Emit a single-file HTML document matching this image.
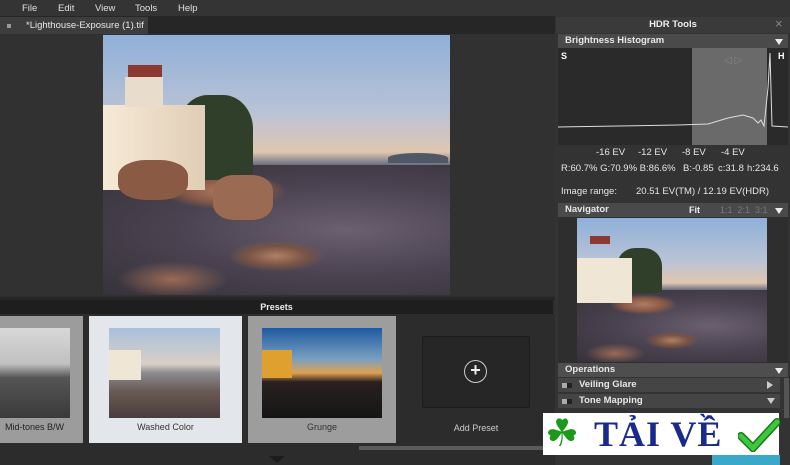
<!DOCTYPE html>
<html><head><style>
*{margin:0;padding:0;box-sizing:border-box}
body{width:790px;height:465px;background:#2f2f2f;font-family:"Liberation Sans",sans-serif;font-size:10px;color:#ddd;position:relative;overflow:hidden}
.a{position:absolute}
.photo{overflow:hidden;background:linear-gradient(180deg,#8fb0d8 0%,#b9c3d6 30%,#e0c6b0 45%,#6a6f80 50%,#4a4045 70%,#5a4a48 100%)}
.photo .rock{position:absolute;left:0;right:0;bottom:0;height:50%;background:
radial-gradient(ellipse 18% 14% at 35% 20%,#b07a60 0%,#8a5a48 60%,transparent 100%),
radial-gradient(ellipse 14% 12% at 50% 70%,#b08068 0%,#7a5444 60%,transparent 100%),
radial-gradient(ellipse 16% 14% at 20% 88%,#9a6a55 0%,transparent 100%),
radial-gradient(ellipse at 70% 50%,#6a6070 0%,#4a4250 50%,#36323a 100%)}
.photo .lh{position:absolute;background:#efe6d6}
.photo .tree{position:absolute;background:#2f3f2a;border-radius:40% 40% 10% 10%}
.hdr{background:#4a4a4a;color:#e8e8e8;font-weight:bold;font-size:9.5px;padding-left:7px;line-height:14px}
.tri{position:absolute;width:0;height:0;border-left:4px solid transparent;border-right:4px solid transparent;border-top:6px solid #eee}
</style></head><body>
<div class="a" style="left:0;top:0;width:790px;height:16px;background:#343434"></div>
<div class="a" style="top:3px;left:22px;color:#e0e0e0;font-size:9.5px">File</div>
<div class="a" style="top:3px;left:58px;color:#e0e0e0;font-size:9.5px">Edit</div>
<div class="a" style="top:3px;left:95px;color:#e0e0e0;font-size:9.5px">View</div>
<div class="a" style="top:3px;left:135px;color:#e0e0e0;font-size:9.5px">Tools</div>
<div class="a" style="top:3px;left:178px;color:#e0e0e0;font-size:9.5px">Help</div>
<div class="a" style="left:0;top:16px;width:556px;height:18px;background:#262626"></div>
<div class="a" style="left:0;top:17px;width:148px;height:17px;background:#3d3d3d"></div>
<div class="a" style="left:7px;top:24px;width:4px;height:4px;background:#999"></div>
<div class="a" style="left:26px;top:20px;font-size:9.5px;color:#e8e8e8">*Lighthouse-Exposure (1).tif</div>
<div class="a" style="left:0;top:34px;width:556px;height:262px;background:#313131"></div>
<div class="a photo" style="left:103px;top:35px;width:347px;height:260px">
 <div class="rock"></div>
 <div class="tree" style="left:75px;top:60px;width:75px;height:85px"></div>
 <div class="a" style="left:285px;top:118px;width:60px;height:10px;background:#505866;border-radius:50% 50% 0 0"></div>
 <div class="lh" style="left:0;top:70px;width:102px;height:85px;background:linear-gradient(90deg,#f6ead6,#e0cdb6)"></div>
 <div class="lh" style="left:22px;top:42px;width:38px;height:30px;background:#e8dccd"></div>
 <div class="a" style="left:25px;top:30px;width:34px;height:12px;background:#8a3a30"></div>
 <div class="a" style="left:15px;top:125px;width:70px;height:40px;background:#8a5a44;border-radius:40%"></div>
 <div class="a" style="left:110px;top:140px;width:60px;height:45px;background:#9a6a52;border-radius:35%"></div>
</div>
<div class="a" style="left:0;top:297px;width:556px;height:3px;background:#262626"></div>
<div class="a" style="left:0;top:300px;width:553px;height:14px;background:#1e1e1e;text-align:center;font-weight:bold;font-size:9px;line-height:14px;color:#eee">Presets</div>
<div class="a" style="left:0;top:314px;width:556px;height:151px;background:#2c2c2c"></div>
<div class="a" style="left:0;top:316px;width:83px;height:127px;background:#9c9c9c"></div>
<div class="a" style="left:0;top:328px;width:70px;height:90px;background:linear-gradient(180deg,#d8d8d8 0%,#c0c0c0 40%,#555 55%,#3a3a3a 100%)"></div>
<div class="a" style="left:-14px;top:422px;width:97px;text-align:center;color:#222;font-size:9px">Mid-tones B/W</div>
<div class="a" style="left:89px;top:316px;width:153px;height:127px;background:#e3e6ea"></div>
<div class="a" style="left:109px;top:328px;width:111px;height:90px;background:linear-gradient(180deg,#a8c0dc 0%,#d9cfc6 40%,#8a8a90 50%,#6a5a55 70%,#4a3d3d 100%)"></div>
<div class="a" style="left:109px;top:350px;width:32px;height:30px;background:#efe6d6"></div>
<div class="a" style="left:89px;top:422px;width:153px;text-align:center;color:#333;font-size:9px">Washed Color</div>
<div class="a" style="left:248px;top:316px;width:148px;height:127px;background:#9d9d9d"></div>
<div class="a" style="left:262px;top:328px;width:120px;height:90px;background:linear-gradient(180deg,#1f5aa0 0%,#7aa0c0 35%,#e0a050 50%,#2a2020 60%,#151515 100%)"></div>
<div class="a" style="left:262px;top:350px;width:30px;height:28px;background:#e0a030"></div>
<div class="a" style="left:248px;top:422px;width:148px;text-align:center;color:#333;font-size:9px">Grunge</div>
<div class="a" style="left:422px;top:336px;width:108px;height:72px;background:#262626;border:1px solid #1c1c1c"></div>
<div class="a" style="left:464px;top:360px;width:23px;height:23px;border:1.5px solid #ccc;border-radius:50%;color:#eee;font-size:18px;line-height:18px;text-align:center;font-weight:bold">+</div>
<div class="a" style="left:422px;top:423px;width:108px;text-align:center;color:#ccc;font-size:9px">Add Preset</div>
<div class="a" style="left:359px;top:446px;width:185px;height:4px;background:#5a5a5a"></div>
<div class="a" style="left:269px;top:456px;width:0;height:0;border-left:8px solid transparent;border-right:8px solid transparent;border-top:7px solid #1c1c1c"></div>
<div class="a" style="left:555px;top:16px;width:235px;height:449px;background:#333"></div>
<div class="a" style="left:556px;top:17px;width:234px;height:16px;background:#3a3a3a;text-align:center;font-weight:bold;font-size:9.5px;line-height:16px;color:#eee">HDR Tools</div>
<div class="a" style="left:775px;top:16px;color:#888;font-size:13px">×</div>
<div class="a hdr" style="left:558px;top:34px;width:230px">Brightness Histogram</div>
<div class="tri" style="left:775px;top:39px"></div>
<div class="a" style="left:558px;top:48px;width:230px;height:97px;background:#2a2a2a"></div>
<div class="a" style="left:692px;top:48px;width:75px;height:97px;background:#6a6a6a"></div>
<div class="a" style="left:561px;top:51px;color:#fff;font-weight:bold;font-size:9px">S</div>
<div class="a" style="left:778px;top:51px;color:#fff;font-weight:bold;font-size:9px">H</div>
<svg class="a" style="left:558px;top:48px" width="230" height="97"><polyline fill="none" stroke="#ddd" stroke-width="1" points="0,79 60,78 120,77 150,76 170,70 185,67 195,70 200,75 203,72 206,78 210,40 212,5 214,78 230,79"/><text x="166" y="15" fill="#888" font-size="10">◁ ▷</text></svg>
<div class="a" style="left:596px;top:147px;font-size:9.5px;color:#e6e6e6">-16 EV</div>
<div class="a" style="left:638px;top:147px;font-size:9.5px;color:#e6e6e6">-12 EV</div>
<div class="a" style="left:682px;top:147px;font-size:9.5px;color:#e6e6e6">-8 EV</div>
<div class="a" style="left:721px;top:147px;font-size:9.5px;color:#e6e6e6">-4 EV</div>
<div class="a" style="left:561px;top:163px;font-size:9.5px;color:#e6e6e6">R:60.7% G:70.9% B:86.6%</div>
<div class="a" style="left:683px;top:163px;font-size:9.5px;color:#e6e6e6">B:-0.85</div>
<div class="a" style="left:718px;top:163px;font-size:9.5px;color:#e6e6e6">c:31.8</div>
<div class="a" style="left:747px;top:163px;font-size:9.5px;color:#e6e6e6">h:234.6</div>
<div class="a" style="left:561px;top:186px;font-size:9.5px;color:#e6e6e6">Image range:</div>
<div class="a" style="left:636px;top:186px;font-size:9.5px;color:#e6e6e6">20.51 EV(TM) / 12.19 EV(HDR)</div>
<div class="a hdr" style="left:558px;top:203px;width:230px">Navigator</div>
<div class="a" style="left:689px;top:205px;font-size:9px;font-weight:bold;color:#eee">Fit</div>
<div class="a" style="left:720px;top:205px;font-size:9px;color:#777;white-space:pre">1:1  2:1  3:1</div>
<div class="tri" style="left:775px;top:208px"></div>
<div class="a" style="left:558px;top:217px;width:230px;height:146px;background:#2e2e2e"></div>
<div class="a photo" style="left:577px;top:218px;width:190px;height:144px">
 <div class="rock"></div>
 <div class="tree" style="left:40px;top:30px;width:45px;height:45px"></div>
 <div class="lh" style="left:0;top:40px;width:55px;height:45px"></div>
 <div class="a" style="left:13px;top:18px;width:20px;height:8px;background:#8a3a30"></div>
</div>
<div class="a hdr" style="left:558px;top:363px;width:230px;background:#4e4e4e">Operations</div>
<div class="tri" style="left:775px;top:368px"></div>
<div class="a hdr" style="left:558px;top:378px;width:222px;padding-left:21px;background:#454545">Veiling Glare</div>
<div class="a" style="left:562px;top:383px;width:10px;height:5px;background:#aaa;border-right:5px solid #222"></div>
<div class="a" style="left:767px;top:381px;border-top:4px solid transparent;border-bottom:4px solid transparent;border-left:6px solid #ccc"></div>
<div class="a hdr" style="left:558px;top:394px;width:222px;padding-left:21px;background:#454545">Tone Mapping</div>
<div class="a" style="left:562px;top:399px;width:10px;height:5px;background:#aaa;border-right:5px solid #222"></div>
<div class="tri" style="left:767px;top:398px;border-top-color:#ccc"></div>
<div class="a" style="left:784px;top:378px;width:5px;height:40px;background:#555"></div>
<div class="a" style="left:712px;top:455px;width:68px;height:10px;background:#3aa8c8"></div>
<div class="a" style="left:543px;top:413px;width:236px;height:42px;background:#fff"></div>
<div class="a" style="left:545px;top:413px;font-size:38px;line-height:42px;color:#1a9a1a">☘</div>
<div class="a" style="left:594px;top:414px;font-family:'Liberation Serif',serif;font-size:36px;line-height:40px;font-weight:bold;color:#1a2a8a;letter-spacing:1px">TẢI VỀ</div>
<svg class="a" style="left:738px;top:418px" width="42" height="34"><path d="M3,18 L15,30 L39,4" fill="none" stroke="#1a7a1a" stroke-width="8" stroke-linecap="round"/><path d="M3,18 L15,30 L39,4" fill="none" stroke="#3cc83c" stroke-width="5" stroke-linecap="round"/></svg>
</body></html>
